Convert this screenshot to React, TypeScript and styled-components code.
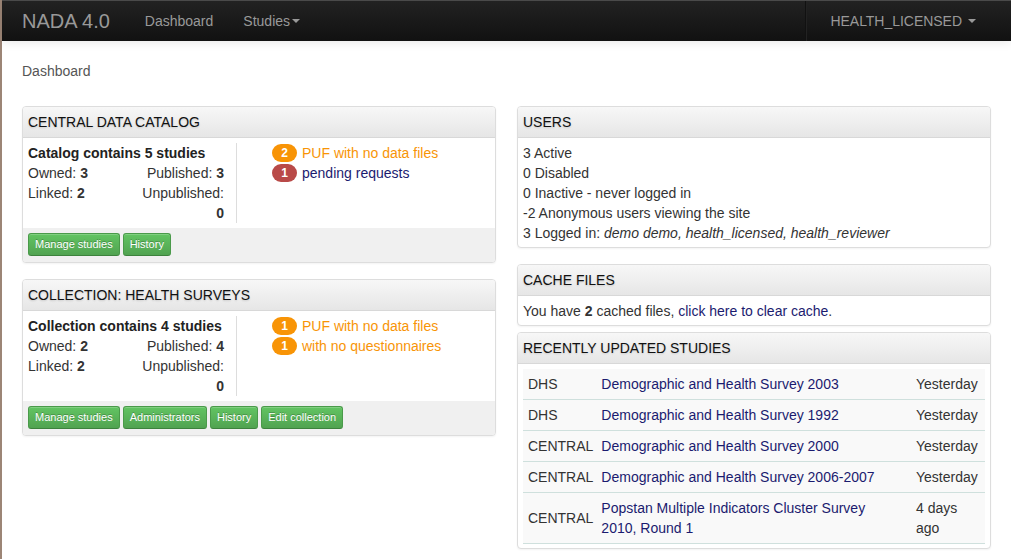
import React from 'react';
import styled, { createGlobalStyle } from 'styled-components';

const GlobalStyle = createGlobalStyle`
  body {
    margin: 0;
    background: #fff;
    font-family: "Liberation Sans", Arial, sans-serif;
    font-size: 14px;
    line-height: 20px;
    color: #333;
  }
`;

const Page = styled.div`
  min-height: 559px;
  border-left: 2px solid #9c8576;
`;

const Navbar = styled.div`
  height: 41px;
  display: flex;
  align-items: center;
  padding-left: 20px;
  background: linear-gradient(#222, #111);
  border-top: 1px solid #4a4a4a;
  box-sizing: border-box;
  box-shadow: 0 1px 10px rgba(0, 0, 0, 0.1);
`;

const Brand = styled.div`
  font-size: 20px;
  color: #999;
  margin-right: 35px;
`;

const NavLink = styled.div`
  color: #999;
  font-size: 14px;
  margin-right: 30px;
  display: flex;
  align-items: center;
`;

const Caret = styled.span<{ $gap?: number }>`
  display: inline-block;
  width: 0;
  height: 0;
  margin-left: ${(p) => p.$gap ?? 2}px;
  border-left: 4px solid transparent;
  border-right: 4px solid transparent;
  border-top: 4px solid #999;
`;

const NavRight = styled.div`
  margin-left: auto;
  height: 100%;
  display: flex;
  align-items: center;
  padding: 0 35px 0 24px;
  border-left: 1px solid #111;
  box-shadow: inset 1px 0 0 #222;
  color: #999;
  letter-spacing: -0.03px;
`;

const Crumb = styled.div`
  color: #555;
  margin: 20px 20px 25px;
`;

const Columns = styled.div`
  display: grid;
  grid-template-columns: 474px 474px;
  column-gap: 21px;
  padding: 0 20px;
  align-items: start;
`;

const Column = styled.div`
  display: flex;
  flex-direction: column;
`;

const Panel = styled.div<{ $gap?: number }>`
  border: 1px solid #ddd;
  border-radius: 4px;
  box-shadow: 0 1px 2px rgba(0, 0, 0, 0.05);
  margin-bottom: ${(p) => p.$gap ?? 16}px;
  background: #fff;
  overflow: hidden;
`;

const PanelHead = styled.div`
  height: 30px;
  line-height: 30px;
  padding: 0 5px;
  background: linear-gradient(#f7f7f7, #e6e6e6);
  border-bottom: 1px solid #d8d8d8;
  color: #111;
  text-shadow: 0 1px 2px rgba(0, 0, 0, 0.15);
`;

const PanelBody = styled.div`
  padding: 5px 5px 4px;
`;

const CatalogRow = styled.div`
  display: flex;
  padding: 5px;
`;

const Stats = styled.div`
  width: 208px;
  border-right: 1px solid #ddd;
  display: grid;
  grid-template-columns: 1fr 98px;
`;

const StatsTitle = styled.div`
  grid-column: 1 / 3;
  font-weight: bold;
  color: #222;
  white-space: nowrap;
`;

const StatLeft = styled.div``;

const StatRight = styled.div`
  text-align: right;
  margin-right: 12px;
`;

const Alerts = styled.div`
  padding-left: 35px;
  display: flex;
  flex-direction: column;
`;

const Alert = styled.div<{ $warn?: boolean }>`
  display: flex;
  align-items: center;
  height: 20px;
  color: ${(p) => (p.$warn ? '#f89406' : '#1b1b6f')};
`;

const Badge = styled.span<{ $tone: 'warn' | 'danger' }>`
  display: inline-block;
  min-width: 7px;
  height: 18px;
  line-height: 18px;
  padding: 0 9px;
  margin-right: 5px;
  border-radius: 9px;
  font-size: 12px;
  font-weight: bold;
  color: #fff;
  text-align: center;
  background: ${(p) => (p.$tone === 'warn' ? '#f89406' : '#b94a48')};
`;

const Toolbar = styled.div`
  display: flex;
  gap: 3px;
  padding: 5px 5px 6px;
  background: #f0f0f0;
`;

const Button = styled.div`
  height: 23px;
  line-height: 21px;
  box-sizing: border-box;
  padding: 0 6px;
  font-size: 11px;
  color: #fff;
  text-shadow: 0 -1px 0 rgba(0, 0, 0, 0.25);
  background: linear-gradient(#62c462, #51a351);
  border: 1px solid #4a9a4a;
  border-bottom-color: #3d823d;
  border-radius: 3px;
  box-shadow: inset 0 1px 0 rgba(255, 255, 255, 0.2);
`;

const Line = styled.div``;

const Link = styled.span`
  color: #1b1b6f;
`;

const Table = styled.table`
  width: 100%;
  border-collapse: collapse;
  background: #f9f9f9;
`;

const Cell = styled.td<{ $w?: number }>`
  padding: 5px;
  vertical-align: middle;
  border-bottom: 1px solid #cfe0dd;
  width: ${(p) => (p.$w ? `${p.$w - 10}px` : 'auto')};
  color: #333;
`;

const SourceCell = styled(Cell)`
  padding-right: 3px;
  white-space: nowrap;
`;

const TitleCell = styled(Cell)`
  color: #1b1b6f;
  padding-right: 9px;
`;

type Collection = {
  title: string;
  label: string;
  owned: number;
  linked: number;
  published: number;
  unpublished: number;
  alerts: { n: number; text: string; tone: 'warn' | 'danger' }[];
  buttons: string[];
};

const catalogs: Collection[] = [
  {
    title: 'CENTRAL DATA CATALOG',
    label: 'Catalog contains 5 studies',
    owned: 3,
    linked: 2,
    published: 3,
    unpublished: 0,
    alerts: [
      { n: 2, text: 'PUF with no data files', tone: 'warn' },
      { n: 1, text: 'pending requests', tone: 'danger' },
    ],
    buttons: ['Manage studies', 'History'],
  },
  {
    title: 'COLLECTION: HEALTH SURVEYS',
    label: 'Collection contains 4 studies',
    owned: 2,
    linked: 2,
    published: 4,
    unpublished: 0,
    alerts: [
      { n: 1, text: 'PUF with no data files', tone: 'warn' },
      { n: 1, text: 'with no questionnaires', tone: 'warn' },
    ],
    buttons: ['Manage studies', 'Administrators', 'History', 'Edit collection'],
  },
];

const studies = [
  ['DHS', 'Demographic and Health Survey 2003', 'Yesterday'],
  ['DHS', 'Demographic and Health Survey 1992', 'Yesterday'],
  ['CENTRAL', 'Demographic and Health Survey 2000', 'Yesterday'],
  ['CENTRAL', 'Demographic and Health Survey 2006-2007', 'Yesterday'],
  ['CENTRAL', 'Popstan Multiple Indicators Cluster Survey 2010, Round 1', '4 days ago'],
];

const CatalogPanel = ({ c }: { c: Collection }) => (
  <Panel>
    <PanelHead>{c.title}</PanelHead>
    <CatalogRow>
      <Stats>
        <StatsTitle>{c.label}</StatsTitle>
        <StatLeft>Owned: <b>{c.owned}</b></StatLeft>
        <StatRight>Published: <b>{c.published}</b></StatRight>
        <StatLeft>Linked: <b>{c.linked}</b></StatLeft>
        <StatRight>Unpublished: <b>{c.unpublished}</b></StatRight>
      </Stats>
      <Alerts>
        {c.alerts.map((a, i) => (
          <Alert key={i} $warn={a.tone === 'warn'}>
            <Badge $tone={a.tone}>{a.n}</Badge>
            {a.text}
          </Alert>
        ))}
      </Alerts>
    </CatalogRow>
    <Toolbar>
      {c.buttons.map((b) => (
        <Button key={b}>{b}</Button>
      ))}
    </Toolbar>
  </Panel>
);

export default function App() {
  return (
    <Page>
      <GlobalStyle />
      <Navbar>
        <Brand>NADA 4.0</Brand>
        <NavLink>Dashboard</NavLink>
        <NavLink>Studies<Caret /></NavLink>
        <NavRight>HEALTH_LICENSED<Caret $gap={6} /></NavRight>
      </Navbar>
      <Crumb>Dashboard</Crumb>
      <Columns>
        <Column>
          {catalogs.map((c) => (
            <CatalogPanel key={c.title} c={c} />
          ))}
        </Column>
        <Column>
          <Panel $gap={16}>
            <PanelHead>USERS</PanelHead>
            <PanelBody>
              <Line>3 Active</Line>
              <Line>0 Disabled</Line>
              <Line>0 Inactive - never logged in</Line>
              <Line>-2 Anonymous users viewing the site</Line>
              <Line>3 Logged in: <i>demo demo, health_licensed, health_reviewer</i></Line>
            </PanelBody>
          </Panel>
          <Panel $gap={6}>
            <PanelHead>CACHE FILES</PanelHead>
            <PanelBody>
              You have <b>2</b> cached files, <Link>click here to clear cache</Link>.
            </PanelBody>
          </Panel>
          <Panel $gap={0}>
            <PanelHead>RECENTLY UPDATED STUDIES</PanelHead>
            <PanelBody>
              <Table>
                <tbody>
                  {studies.map((s, i) => (
                    <tr key={i}>
                      <SourceCell $w={74}>{s[0]}</SourceCell>
                      <TitleCell>{s[1]}</TitleCell>
                      <Cell $w={74}>{s[2]}</Cell>
                    </tr>
                  ))}
                </tbody>
              </Table>
            </PanelBody>
          </Panel>
        </Column>
      </Columns>
    </Page>
  );
}
